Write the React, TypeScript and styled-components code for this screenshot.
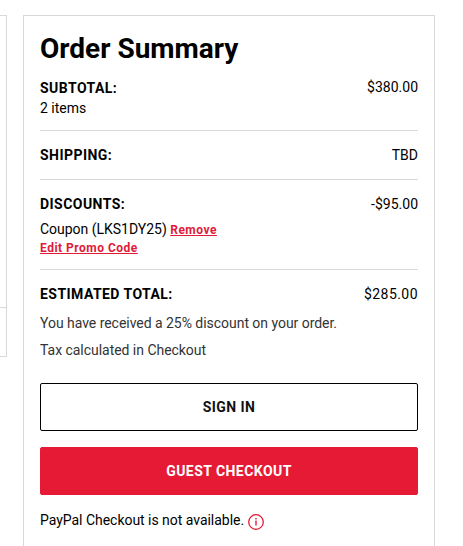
import React from "react";
import styled, { createGlobalStyle } from "styled-components";

const Global = createGlobalStyle`
  * { box-sizing: border-box; }
  body { margin: 0; background: #fff; color: #000; font: 400 14px/20px Roboto, sans-serif; overflow: hidden; }
`;
const Page = styled.main`display: flex; height: 546px; padding-top: 15px; overflow: hidden;`;
const CartEdge = styled.div`
  width: 7px; height: 342px; margin-right: 16px;
  border: solid #d8d8d8; border-width: 1px 1px 1px 0;
`;
const CartRow = styled.div`height: 292px; border-bottom: 1px solid #d8d8d8;`;
const Card = styled.section`
  width: 412px; height: 560px; flex: none; padding: 16px; border: 1px solid #d8d8d8;
`;
const Title = styled.h1`margin: 0; font-size: 28px; line-height: 34px; font-weight: 700;`;
const Block = styled.div<{ $top: number; $height: number; $last?: boolean }>`
  height: ${p => p.$height}px; padding-top: ${p => p.$top}px;
  border-bottom: ${p => (p.$last ? "0" : "1px solid #d8d8d8")};
`;
const Row = styled.div`display: flex; justify-content: space-between;`;
const Label = styled.span`font-weight: 700; letter-spacing: 0.45px;`;
const SubtotalLabel = styled(Label)`padding-top: 1px;`;
const Amount = styled.span<{ $spacing?: number }>`letter-spacing: ${p => p.$spacing ?? 0}px;`;
const Coupon = styled.div`margin-top: 6px; line-height: 18px; letter-spacing: -0.02px;`;
const Link = styled.a`
  color: #e01a38; font-size: 12px; font-weight: 700; letter-spacing: 0.5px; text-decoration: underline;
`;
const EditLine = styled.div`font-size: 12px; line-height: 18px;`;
const Note = styled.p`margin: 0 0 7px; color: #333; letter-spacing: -0.035px;`;
const Actions = styled.div`display: grid; gap: 16px; margin-top: 23px;`;
const Button = styled.button<{ $primary?: boolean }>`
  display: block; width: 100%; height: 48px; padding: 0; border-radius: 2px;
  border: 1px solid ${p => (p.$primary ? "#e71a35" : "#000")};
  background: ${p => (p.$primary ? "#e71a35" : "#fff")};
  color: ${p => (p.$primary ? "#fff" : "#111")};
  font: 700 14px/20px Roboto, sans-serif; letter-spacing: 0.45px;
`;
const Paypal = styled.div`
  display: flex; align-items: flex-start; gap: 4px; margin-top: 15px; letter-spacing: -0.03px;
  svg { margin-top: 4px; }
`;

export default function App() {
  return (
    <>
      <Global />
      <Page>
        <CartEdge><CartRow /></CartEdge>
        <Card>
          <Title>Order Summary</Title>
          <Block $top={11} $height={65}>
            <Row><SubtotalLabel>SUBTOTAL:</SubtotalLabel><Amount>$380.00</Amount></Row>
            <div>2 items</div>
          </Block>
          <Block $top={14} $height={49}>
            <Row><Label>SHIPPING:</Label><Amount>TBD</Amount></Row>
          </Block>
          <Block $top={14} $height={90}>
            <Row><Label>DISCOUNTS:</Label><Amount>-$95.00</Amount></Row>
            <Coupon>Coupon (LKS1DY25) <Link>Remove</Link></Coupon>
            <EditLine><Link>Edit Promo Code</Link></EditLine>
          </Block>
          <Block $top={14} $height={43} $last>
            <Row><Label>ESTIMATED TOTAL:</Label><Amount $spacing={0.45}>$285.00</Amount></Row>
          </Block>
          <Note>You have received a 25% discount on your order.</Note>
          <Note>Tax calculated in Checkout</Note>
          <Actions>
            <Button>SIGN IN</Button>
            <Button $primary>GUEST CHECKOUT</Button>
          </Actions>
          <Paypal>
            <span>PayPal Checkout is not available.</span>
            <svg width="16" height="16" viewBox="0 0 16 16" fill="none" stroke="#e71a38">
              <circle cx="8" cy="8" r="7.3" strokeWidth="1.3" />
              <path d="M8 6.5v5" strokeWidth="1.4" />
              <path d="M8 4v1.4" strokeWidth="1.4" />
            </svg>
          </Paypal>
        </Card>
      </Page>
    </>
  );
}
